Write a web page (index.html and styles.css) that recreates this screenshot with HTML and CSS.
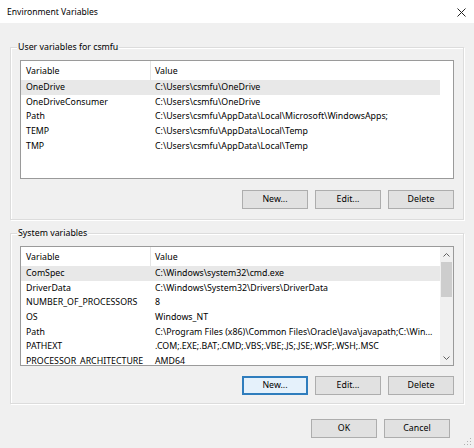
FILE: index.html
```
<!DOCTYPE html>
<html>
<head>
<meta charset="utf-8">
<link rel="stylesheet" href="styles.css">
</head>
<body>
<div class="window">
  <div class="titlebar">
    <span class="title">Environment Variables</span>
    <svg class="close" width="9" height="9" viewBox="0 0 9 9"><path d="M0.5 0.5L8.5 8.5M8.5 0.5L0.5 8.5" stroke="#222" stroke-width="1" fill="none"/></svg>
  </div>
  <div class="content">
    <div class="group user">
      <span class="group-label">User variables for csmfu</span>
      <div class="list">
        <div class="list-main">
          <div class="list-head"><div class="c1">Variable</div><div class="c2">Value</div></div>
          <div class="row sel"><div class="c1">OneDrive</div><div class="c2">C:\Users\csmfu\OneDrive</div></div>
          <div class="row"><div class="c1">OneDriveConsumer</div><div class="c2">C:\Users\csmfu\OneDrive</div></div>
          <div class="row"><div class="c1">Path</div><div class="c2">C:\Users\csmfu\AppData\Local\Microsoft\WindowsApps;</div></div>
          <div class="row"><div class="c1">TEMP</div><div class="c2">C:\Users\csmfu\AppData\Local\Temp</div></div>
          <div class="row"><div class="c1">TMP</div><div class="c2">C:\Users\csmfu\AppData\Local\Temp</div></div>
        </div>
      </div>
      <div class="btns">
        <button class="btn">New...</button>
        <button class="btn">Edit...</button>
        <button class="btn">Delete</button>
      </div>
    </div>

    <div class="group sys">
      <span class="group-label">System variables</span>
      <div class="list">
        <div class="list-main">
          <div class="list-head"><div class="c1">Variable</div><div class="c2">Value</div></div>
          <div class="row sel"><div class="c1">ComSpec</div><div class="c2">C:\Windows\system32\cmd.exe</div></div>
          <div class="row"><div class="c1">DriverData</div><div class="c2">C:\Windows\System32\Drivers\DriverData</div></div>
          <div class="row"><div class="c1">NUMBER_OF_PROCESSORS</div><div class="c2">8</div></div>
          <div class="row"><div class="c1">OS</div><div class="c2">Windows_NT</div></div>
          <div class="row"><div class="c1">Path</div><div class="c2">C:\Program Files (x86)\Common Files\Oracle\Java\javapath;C:\Win...</div></div>
          <div class="row"><div class="c1">PATHEXT</div><div class="c2">.COM;.EXE;.BAT;.CMD;.VBS;.VBE;.JS;.JSE;.WSF;.WSH;.MSC</div></div>
          <div class="row"><div class="c1">PROCESSOR_ARCHITECTURE</div><div class="c2">AMD64</div></div>
        </div>
        <div class="scrollbar">
          <div class="arrow"><svg width="7" height="4" viewBox="0 0 7 4"><path d="M0.5 3.5L3.5 0.5L6.5 3.5" stroke="#606060" fill="none"/></svg></div>
          <div class="track"><div class="thumb"></div></div>
          <div class="arrow"><svg width="7" height="4" viewBox="0 0 7 4"><path d="M0.5 0.5L3.5 3.5L6.5 0.5" stroke="#606060" fill="none"/></svg></div>
        </div>
      </div>
      <div class="btns">
        <button class="btn focus">New...</button>
        <button class="btn">Edit...</button>
        <button class="btn">Delete</button>
      </div>
    </div>

    <div class="footer">
      <button class="btn">OK</button>
      <button class="btn">Cancel</button>
    </div>
  </div>
  <svg class="grip" width="8" height="8" viewBox="0 0 8 8">
    <rect x="6" y="0" width="1" height="1" fill="#b0b0b0"/>
    <rect x="3" y="3" width="1" height="1" fill="#b0b0b0"/>
    <rect x="6" y="3" width="1" height="1" fill="#b0b0b0"/>
    <rect x="0" y="6" width="1" height="1" fill="#b0b0b0"/>
    <rect x="3" y="6" width="1" height="1" fill="#b0b0b0"/>
    <rect x="6" y="6" width="1" height="1" fill="#b0b0b0"/>
  </svg>
</div>
</body>
</html>
```
FILE: styles.css
```
* { box-sizing: border-box; }
body {
  margin: 0;
  font-family: "Noto Sans", "Open Sans", sans-serif;
  font-size: 8.8px;
  color: #000;
}
.window {
  width: 474px;
  height: 448px;
  background: #f0f0f0;
  display: flex;
  flex-direction: column;
  position: relative;
  overflow: hidden;
}
.titlebar {
  height: 23px;
  background: #fff;
  display: flex;
  align-items: center;
  justify-content: space-between;
  padding: 1px 8px 0 7px;
  flex: none;
}
.title { font-size: 8.6px; }
.close { display: block; }
.content {
  display: flex;
  flex-direction: column;
  padding: 24px 10px 0 10px;
}
.group {
  position: relative;
  border: 1px solid #dcdcdc;
  box-shadow: inset 1px 1px 0 #fff, 1px 1px 0 #fff;
  padding: 12px 9px 10px 9px;
  display: flex;
  flex-direction: column;
}
.group.sys {
  margin-top: 13px;
  padding-bottom: 8px;
}
.group-label {
  position: absolute;
  top: -8px;
  left: 6px;
  padding: 0 1px;
  background: #f0f0f0;
  line-height: 14px;
}
.list {
  width: 434px;
  height: 119px;
  border: 1px solid #9a9a9a;
  background: #fff;
  overflow: hidden;
  display: flex;
}
.group.sys .list { height: 120px; }
.list-main {
  width: 419px;
  flex: none;
  display: flex;
  flex-direction: column;
}
.list-head {
  height: 19px;
  display: flex;
  align-items: center;
  flex: none;
}
.list-head .c2 {
  border-left: 1px solid #e5e5e5;
  align-self: stretch;
  display: flex;
  align-items: center;
}
.row {
  height: 14.65px;
  line-height: 14.65px;
  display: flex;
  flex: none;
  white-space: nowrap;
}
.row.sel { background: #e8e8e8; }
.c1 {
  width: 129px;
  padding-left: 5px;
  flex: none;
  overflow: hidden;
}
.c2 {
  flex: 1;
  padding-left: 4px;
  overflow: hidden;
}
.row .c2 { padding-left: 5px; }
.scrollbar {
  flex: 1;
  background: #f0f0f0;
  display: flex;
  flex-direction: column;
}
.arrow {
  height: 15px;
  display: flex;
  align-items: center;
  justify-content: center;
  flex: none;
}
.arrow svg { display: block; }
.track {
  flex: 1;
  padding: 0 1px;
}
.thumb {
  height: 35px;
  background: #cdcdcd;
}
.btns {
  display: flex;
  justify-content: flex-end;
  gap: 7px;
  margin-top: 11px;
}
.group.sys .btns { margin-top: 10px; }
.btn {
  width: 66px;
  height: 19px;
  border: 1px solid #adadad;
  background: #e1e1e1;
  font-family: inherit;
  font-size: inherit;
  color: #000;
  padding: 0;
  margin: 0;
  line-height: 17px;
}
.btn.focus {
  border: 2px solid #2f7dbd;
  background: #e5f1fb;
  line-height: 15px;
}
.footer {
  display: flex;
  justify-content: flex-end;
  gap: 7px;
  margin-top: 15px;
  padding-right: 14px;
}
.grip {
  position: absolute;
  right: 2px;
  bottom: 2px;
}
```
